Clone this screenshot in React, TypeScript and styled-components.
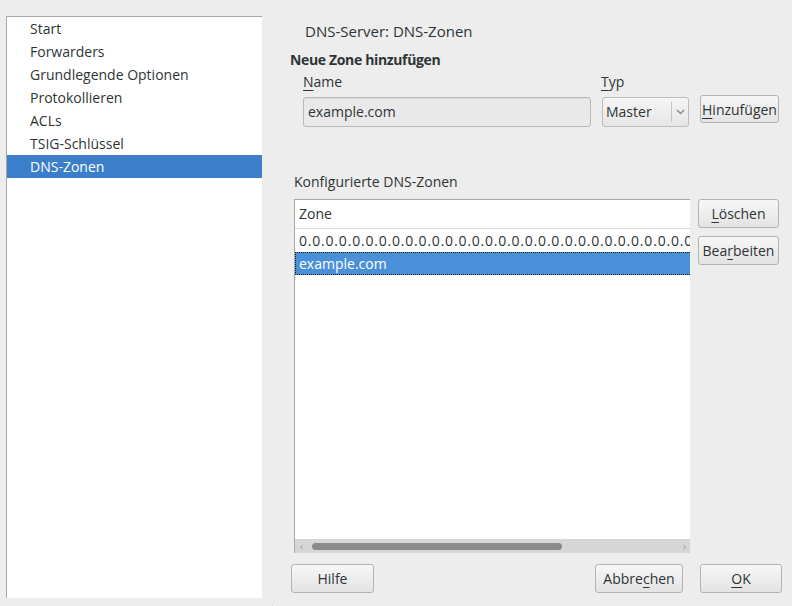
import React from "react";
import styled, { createGlobalStyle } from "styled-components";

const GlobalStyle = createGlobalStyle`
  html, body { margin: 0; padding: 0; background: #ededed; }
  body {
    font-family: "Open Sans", "Noto Sans", sans-serif;
    font-size: 14px;
    color: #2e3436;
  }
  #root { width: 792px; height: 606px; }
`;

const Window = styled.div`
  display: flex;
  width: 792px;
  height: 606px;
  background: #ededed;
  overflow: hidden;
`;

const Sidebar = styled.ul`
  list-style: none;
  margin: 16px 0 0 6px;
  padding: 0;
  width: 256px;
  height: 582px;
  box-sizing: border-box;
  background: #fff;
  border-top: 1px solid #a8a8a8;
  border-left: 1px solid #a8a8a8;
  flex: none;
`;

const SideItem = styled.li<{ $selected?: boolean }>`
  height: 23px;
  line-height: 23px;
  padding-left: 23px;
  white-space: nowrap;
  background: ${(p) => (p.$selected ? "#3b7fca" : "transparent")};
  color: ${(p) => (p.$selected ? "#ffffff" : "#2e3436")};
`;

const Handle = styled.div`
  flex: none;
  width: 4px;
  margin: 0 4px 0 10px;
  position: relative;
  background-image: repeating-linear-gradient(to bottom, #fafafa 0 1px, #dcdcdc 1px 2px);
  background-size: 1px 100%;
  background-repeat: no-repeat;
  &::after {
    content: "";
    position: absolute;
    left: 2px;
    top: 1px;
    bottom: 0;
    width: 1px;
    background-image: repeating-linear-gradient(to bottom, #fafafa 0 1px, #dcdcdc 1px 2px);
  }
`;

const Pane = styled.div`
  flex: 1;
  display: flex;
  flex-direction: column;
  padding: 0 10px 0 10px;
  min-width: 0;
`;

const Title = styled.div`
  margin: 21px 0 0 15px;
  line-height: 20px;
  font-size: 15px;
`;

const Section = styled.div`
  margin: 9px 0 0 0;
  line-height: 20px;
  font-weight: 700;
  letter-spacing: -0.35px;
`;

const AddGrid = styled.div`
  display: grid;
  grid-template-columns: 288px 87px 79px;
  column-gap: 11px;
  margin: 2px 0 0 13px;
  grid-template-rows: 20px 30px;
  row-gap: 5px;
`;

const Label = styled.div<{ $shift?: number }>`
  line-height: 20px;
  margin-left: ${(p) => p.$shift ?? 0}px;
`;

const Mn = styled.span`
  text-decoration: underline;
  text-underline-offset: 3px;
  text-decoration-thickness: 1px;
`;

const Entry = styled.div`
  box-sizing: border-box;
  height: 30px;
  border: 1px solid #b9b9b9;
  border-radius: 3px;
  background: #e9e9e9;
  box-shadow: inset 0 1px 1px rgba(0, 0, 0, 0.06);
  padding-left: 4px;
  line-height: 28px;
`;

const Combo = styled.div`
  box-sizing: border-box;
  height: 30px;
  border: 1px solid #bdbdbd;
  border-radius: 3px;
  background: linear-gradient(#f5f5f5, #e6e6e6);
  display: flex;
  align-items: center;
`;

const ComboText = styled.span`
  flex: 1;
  padding-left: 3px;
  line-height: 28px;
`;

const ComboSep = styled.span`
  width: 1px;
  height: 20px;
  background: #c4c4c4;
`;

const ComboArrow = styled.span`
  width: 16px;
  display: flex;
  justify-content: center;
`;

const Button = styled.div<{ $w?: number; $h?: number }>`
  box-sizing: border-box;
  width: ${(p) => (p.$w ? `${p.$w}px` : "auto")};
  height: ${(p) => p.$h ?? 29}px;
  border: 1px solid #b3b3b3;
  border-radius: 3px;
  background: linear-gradient(#f7f7f7, #e3e3e3);
  display: flex;
  align-items: center;
  justify-content: center;
  white-space: nowrap;
  flex: none;
`;

const AddButton = styled(Button)`
  margin-top: -2px;
`;

const ListLabel = styled.div`
  margin: 45px 0 0 4px;
  line-height: 20px;
`;

const ListRow = styled.div`
  display: flex;
  margin: 7px 0 0 4px;
  gap: 8px;
  align-items: flex-start;
`;

const Table = styled.div`
  box-sizing: border-box;
  width: 396px;
  height: 354px;
  background: #fff;
  border-top: 1px solid #a8a8a8;
  border-left: 1px solid #a8a8a8;
  display: flex;
  flex-direction: column;
  overflow: hidden;
  flex: none;
`;

const HeaderCell = styled.div`
  height: 28px;
  line-height: 28px;
  padding-left: 4px;
  border-bottom: 1px solid #d8d8d8;
  flex: none;
`;

const Row = styled.div<{ $selected?: boolean; $tracking?: number }>`
  box-sizing: border-box;
  height: 23px;
  line-height: 21px;
  padding-left: 3px;
  white-space: nowrap;
  overflow: hidden;
  flex: none;
  letter-spacing: ${(p) => p.$tracking ?? 0}px;
  background: ${(p) => (p.$selected ? "#4a90d9" : "transparent")};
  color: ${(p) => (p.$selected ? "#ffffff" : "#2e3436")};
  border: 1px dotted ${(p) => (p.$selected ? "#1a1a1a" : "transparent")};
  border-right: none;
`;

const Spacer = styled.div`
  flex: 1;
`;

const HScroll = styled.div`
  flex: none;
  height: 14px;
  background: #d6d6d6;
  display: flex;
  align-items: center;
  padding: 0 4px 0 5px;
  gap: 9px;
  font-size: 10px;
  color: #9a9a9a;
`;

const Thumb = styled.div`
  width: 250px;
  height: 7px;
  border-radius: 4px;
  background: #8b8b8b;
`;

const SideButtons = styled.div`
  display: flex;
  flex-direction: column;
  gap: 8px;
`;

const Footer = styled.div`
  display: flex;
  margin: 11px 0 0 1px;
  align-items: center;
`;

const FooterRight = styled.div`
  margin-left: auto;
  display: flex;
  gap: 17px;
`;

const longZone = Array.from({ length: 40 }, () => "0.").join("") + "in-addr.arpa";

export default function App() {
  const items = [
    "Start",
    "Forwarders",
    "Grundlegende Optionen",
    "Protokollieren",
    "ACLs",
    "TSIG-Schlüssel",
    "DNS-Zonen",
  ];
  return (
    <>
      <GlobalStyle />
      <Window>
        <Sidebar>
          {items.map((t) => (
            <SideItem key={t} $selected={t === "DNS-Zonen"}>
              {t}
            </SideItem>
          ))}
        </Sidebar>
        <Handle />
        <Pane>
          <Title>DNS-Server: DNS-Zonen</Title>
          <Section>Neue Zone hinzufügen</Section>
          <AddGrid>
            <Label>
              <Mn>N</Mn>ame
            </Label>
            <Label $shift={-1}>
              <Mn>T</Mn>yp
            </Label>
            <div />
            <Entry>example.com</Entry>
            <Combo>
              <ComboText>Master</ComboText>
              <ComboSep />
              <ComboArrow>
                <svg width="9" height="6" viewBox="0 0 9 6">
                  <path d="M1 1 L4.5 4.5 L8 1" fill="none" stroke="#8a8a8a" strokeWidth="1.5" />
                </svg>
              </ComboArrow>
            </Combo>
            <AddButton $h={28}>
              <span>
                <Mn>H</Mn>inzufügen
              </span>
            </AddButton>
          </AddGrid>
          <ListLabel>Konfigurierte DNS-Zonen</ListLabel>
          <ListRow>
            <Table>
              <HeaderCell>Zone</HeaderCell>
              <Row $tracking={0.8}>{longZone}</Row>
              <Row $selected>example.com</Row>
              <Spacer />
              <HScroll>
                <span>‹</span>
                <Thumb />
                <Spacer />
                <span>›</span>
              </HScroll>
            </Table>
            <SideButtons>
              <Button $w={81}>
                <span>
                  <Mn>L</Mn>öschen
                </span>
              </Button>
              <Button $w={81}>
                <span>
                  Bea<Mn>r</Mn>beiten
                </span>
              </Button>
            </SideButtons>
          </ListRow>
          <Footer>
            <Button $w={83}>Hilfe</Button>
            <FooterRight>
              <Button $w={88}>
                <span>
                  Abbre<Mn>c</Mn>hen
                </span>
              </Button>
              <Button $w={82}>
                <span>
                  <Mn>O</Mn>K
                </span>
              </Button>
            </FooterRight>
          </Footer>
        </Pane>
      </Window>
    </>
  );
}
